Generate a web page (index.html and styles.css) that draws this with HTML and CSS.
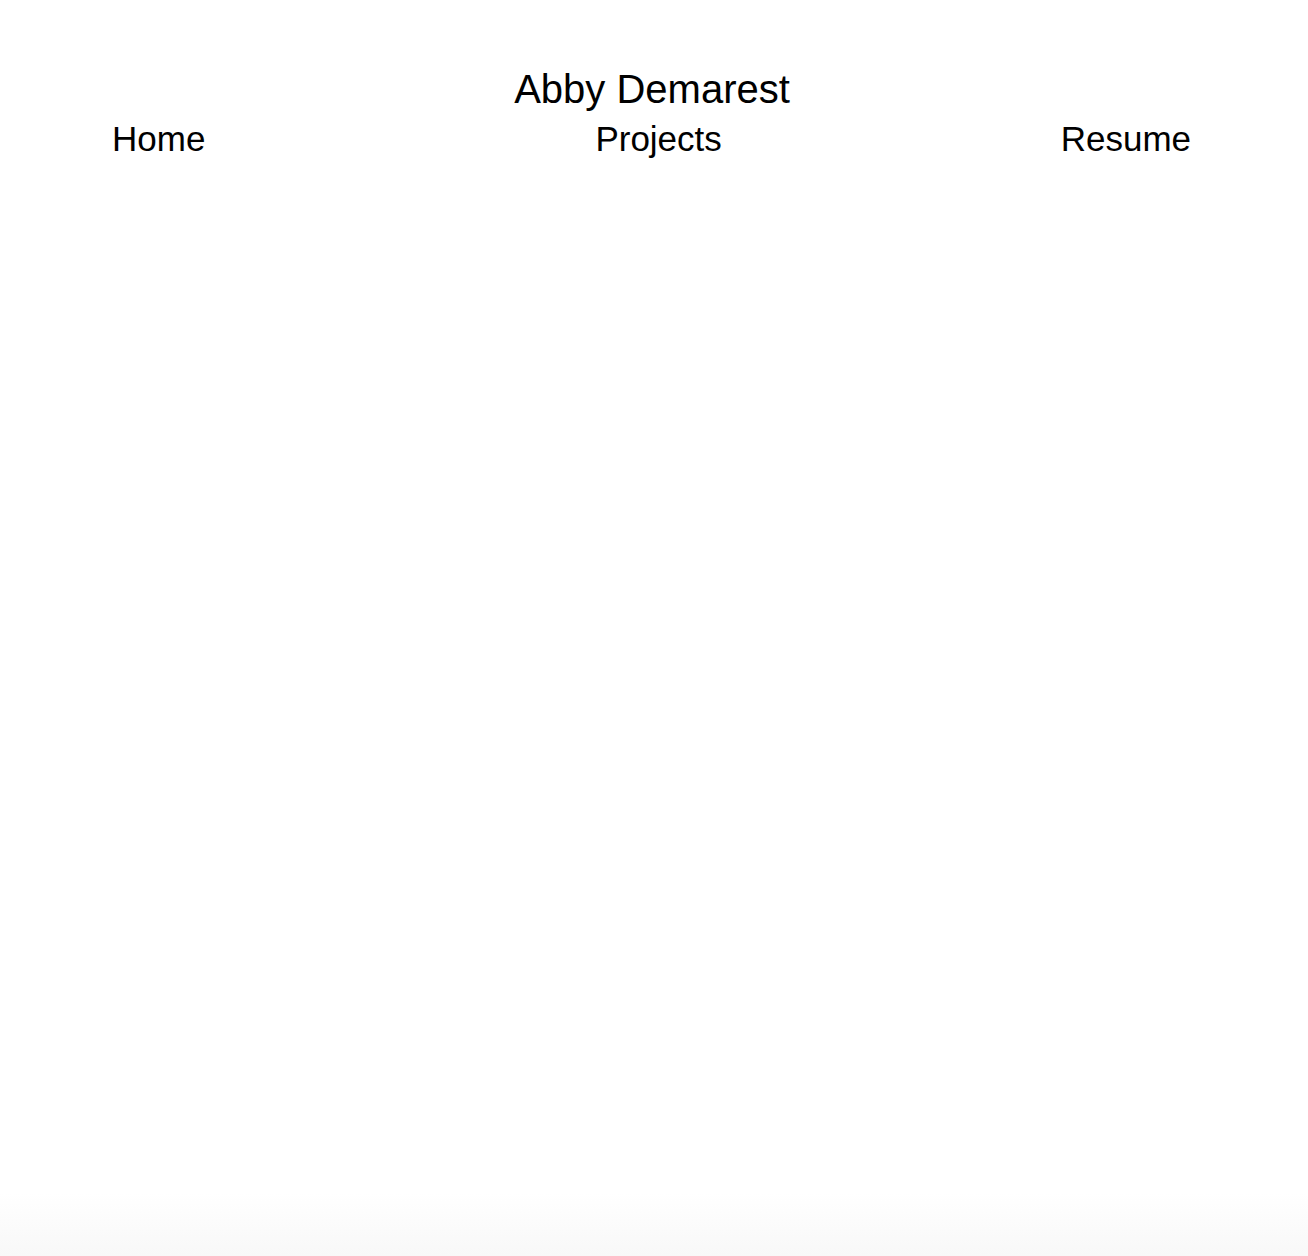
FILE: index.html
```html
<!DOCTYPE html>
<html lang="en">
<head>
<meta charset="utf-8">
<title>Abby Demarest</title>
<link rel="stylesheet" href="styles.css">
</head>
<body>
<header class="site-header">
  <h1 class="site-title">Abby Demarest</h1>
  <nav class="site-nav">
    <a class="nav-link nav-home" href="#">Home</a>
    <a class="nav-link nav-projects" href="#">Projects</a>
    <a class="nav-link nav-resume" href="#">Resume</a>
  </nav>
</header>
</body>
</html>
```
FILE: styles.css
```css
html {
  height: 100%;
}
body {
  margin: 0;
  min-height: 100%;
  font-family: "Liberation Sans", Arial, Helvetica, sans-serif;
  color: #000;
  background: linear-gradient(to bottom, #ffffff 0, #ffffff 95%, #f8f8f8 100%);
}
.site-header {
  padding-top: 67px;
}
.site-title {
  margin: 0;
  padding-right: 4px;
  font-size: 40px;
  font-weight: normal;
  text-align: center;
}
.site-nav {
  display: flex;
  margin-top: 7px;
  padding-left: 112px;
  padding-right: 117px;
}
.nav-link {
  font-size: 35px;
  color: #000;
  text-decoration: none;
}
.nav-projects {
  margin-left: 390px;
  margin-right: auto;
}
```
